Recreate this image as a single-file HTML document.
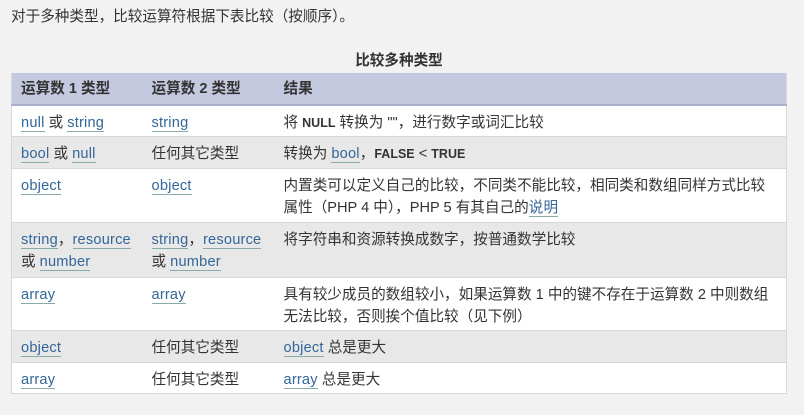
<!DOCTYPE html>
<html><head><meta charset="utf-8"><style>
body{margin:0;background:#f2f2f2;font-family:"Liberation Sans","Noto Sans CJK SC",sans-serif;font-size:14.6px;color:#333;width:804px;height:415px;overflow:hidden;position:relative}
.p{position:absolute;left:11px;top:6px;line-height:22px}
.cap{position:absolute;left:11px;width:776px;top:50px;text-align:center;font-weight:bold;line-height:22px}
table{position:absolute;left:11px;top:73px;width:776px;border-collapse:collapse;border:1px solid #d8d8d8;border-top:0;table-layout:fixed}
td,th{text-align:left;vertical-align:top;padding:6px 9px 0 9px;line-height:22px;box-sizing:border-box}
td.n{white-space:nowrap;padding-right:0}
th{background:#c4c9df;border-bottom:2px solid #aab0cc;height:32px;font-weight:bold;padding-top:5px}
tr{border-bottom:1px solid #d8d8d8}
tr.w{background:#fff}tr.g{background:#e8e8e8}
a{color:#369;text-decoration:none;border-bottom:1px solid #8aa;letter-spacing:0.2px}
b{font-size:12.5px}
</style></head><body>
<div class="p">对于多种类型，比较运算符根据下表比较（按顺序）。</div>
<div class="cap">比较多种类型</div>
<table>
<tr><th style="width:131px">运算数 1 类型</th><th style="width:132px">运算数 2 类型</th><th>结果</th></tr>
<tr class="w" style="height:31px"><td class="n"><a>null</a> 或 <a>string</a></td><td class="n"><a>string</a></td><td>将 <b>NULL</b> 转换为 ""，进行数字或词汇比较</td></tr>
<tr class="g" style="height:32px"><td class="n"><a>bool</a> 或 <a>null</a></td><td class="n">任何其它类型</td><td>转换为 <a>bool</a>，<b>FALSE</b> &lt; <b>TRUE</b></td></tr>
<tr class="w" style="height:54px"><td class="n"><a>object</a></td><td class="n"><a>object</a></td><td>内置类可以定义自己的比较，不同类不能比较，相同类和数组同样方式比较<br>属性（PHP 4 中），PHP 5 有其自己的<a>说明</a></td></tr>
<tr class="g" style="height:55px"><td class="n"><a>string</a>，<a>resource</a><br>或 <a>number</a></td><td class="n"><a>string</a>，<a>resource</a><br>或 <a>number</a></td><td>将字符串和资源转换成数字，按普通数学比较</td></tr>
<tr class="w" style="height:53px"><td class="n"><a>array</a></td><td class="n"><a>array</a></td><td>具有较少成员的数组较小，如果运算数 1 中的键不存在于运算数 2 中则数组<br>无法比较，否则挨个值比较（见下例）</td></tr>
<tr class="g" style="height:32px"><td class="n"><a>object</a></td><td class="n">任何其它类型</td><td><a>object</a> 总是更大</td></tr>
<tr class="w" style="height:31px"><td class="n"><a>array</a></td><td class="n">任何其它类型</td><td><a>array</a> 总是更大</td></tr>
</table>
</body></html>
